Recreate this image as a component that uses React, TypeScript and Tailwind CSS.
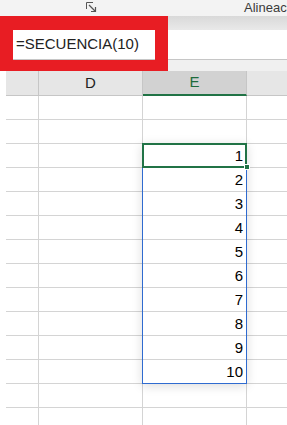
import React from "react";

const nums = [1, 2, 3, 4, 5, 6, 7, 8, 9, 10];

const Launcher = () => (
  <svg width="11" height="11" viewBox="0 0 11 11" className="block">
    <path d="M0.5 7 V0.5 H7" fill="none" stroke="#555" strokeWidth="1" />
    <path d="M3 3 L9 9" stroke="#555" strokeWidth="1.2" />
    <path d="M5 9.5 H9.5 V5" fill="none" stroke="#555" strokeWidth="1.2" />
  </svg>
);

const App = () => {
  const rows = Array.from({ length: 14 }, (_, i) => i);
  return (
    <div
      className="relative w-[287px] h-[425px] overflow-hidden bg-white"
      style={{ fontFamily: '"Liberation Sans", Arial, sans-serif' }}
    >
      {/* ribbon strip */}
      <div className="flex items-start h-[16px] bg-[#f3f3f3] overflow-hidden">
        <div className="ml-[86px] mt-[2px]">
          <Launcher />
        </div>
        <div className="ml-[3px] w-px h-[13px] bg-[#c8c8c8]" />
        <span className="ml-[144px] text-[13px] leading-[15px] text-[#3b3b3b] whitespace-nowrap">
          Alineación
        </span>
      </div>
      <div className="h-[14px] bg-gradient-to-b from-[#d9d9d9] to-[#e9e9e9]" />

      {/* formula bar */}
      <div className="flex items-center h-[30px] bg-white border-b border-[#c6c6c6] pl-[16px]">
        <span className="text-[15px] text-[#222] whitespace-nowrap">=SECUENCIA(10)</span>
      </div>
      <div className="h-[11px] bg-[#f0f0f0]" />

      {/* column headers */}
      <div className="flex h-[25px] bg-white pl-[6px]">
        <div className="w-[33px] bg-[#e6e6e6] border-r border-b border-[#c6c6c6]" />
        <div className="w-[104px] flex items-center justify-center bg-[#e6e6e6] border-r border-b border-[#c6c6c6] text-[15px] text-[#222]">
          D
        </div>
        <div className="w-[104px] flex items-center justify-center bg-[#d2d2d2] border-r border-[#c6c6c6] border-b-2 border-b-[#217346] text-[15px] text-[#1e6b3c]">
          E
        </div>
        <div className="flex-1 bg-[#e6e6e6] border-b border-[#c6c6c6]" />
      </div>

      {/* grid */}
      <div className="relative pl-[6px]">
        {rows.map((r) => (
          <div key={r} className="flex h-[24px]">
            <div className="w-[33px] border-r border-b border-[#d4d4d4]" />
            <div className="w-[104px] border-r border-b border-[#d4d4d4]" />
            <div className="w-[104px] border-r border-b border-[#d4d4d4] flex items-end justify-end pr-[3px] pb-[4px]">
              {r >= 2 && r <= 11 ? (
                <span className="text-[15px] leading-none text-black">{nums[r - 2]}</span>
              ) : null}
            </div>
            <div className="flex-1 border-b border-[#d4d4d4]" />
          </div>
        ))}

        {/* spill range */}
        <div className="absolute left-[142px] top-[47px] w-[105px] h-[241px] border border-[#2f6bd0] shadow-[0_2px_10px_rgba(0,0,0,0.14)] pointer-events-none" />
        {/* active cell */}
        <div className="absolute left-[142px] top-[47px] w-[105px] h-[25px] border-2 border-[#217346]" />
        <div className="absolute left-[244px] top-[68px] w-[6px] h-[6px] bg-[#217346] border border-white" />
      </div>

      {/* red annotation box */}
      <div className="absolute left-0 top-[16px] w-[168px] h-[55px] border-[13px] border-t-[14px] border-b-[11px] border-[#e81d23]" />
    </div>
  );
};

export default App;
